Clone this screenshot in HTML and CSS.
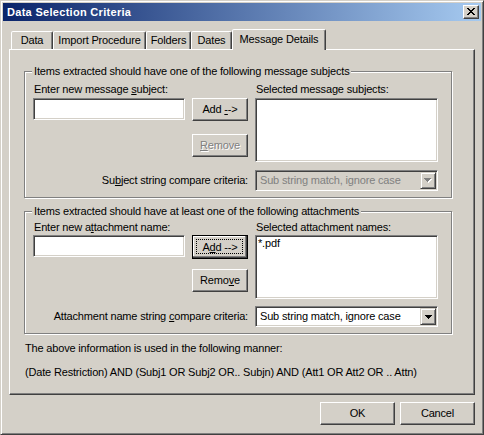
FILE: index.html
```html
<!DOCTYPE html>
<html>
<head>
<meta charset="utf-8">
<link rel="stylesheet" href="styles.css">
</head>
<body>
<div class="window">
  <div class="titlebar">
    <span class="title">Data Selection Criteria</span>
    <div class="close"><svg width="8" height="7" viewBox="0 0 8 7" shape-rendering="crispEdges"><path fill="#000" d="M0 0h2v1H0zM6 0h2v1H6zM1 1h2v1H1zM5 1h2v1H5zM2 2h4v1H2zM3 3h2v1H3zM2 4h4v1H2zM1 5h2v1H1zM5 5h2v1H5zM0 6h2v1H0zM6 6h2v1H6z"/></svg></div>
  </div>
  <div class="body">
    <div class="tabs">
      <div class="tab t-data">Data</div>
      <div class="tab t-import">Import Procedure</div>
      <div class="tab t-folders">Folders</div>
      <div class="tab t-dates">Dates</div>
      <div class="tab t-msg sel">Message Details</div>
    </div>
    <div class="panel">
      <fieldset class="group g1">
        <legend>Items extracted should have one of the following message subjects</legend>
        <div class="grid">
          <div class="lbl l1">Enter new message <u>s</u>ubject:</div>
          <div class="lbl l3">Selected message subjects:</div>
          <div class="edit in"></div>
          <div class="btn add">Add&nbsp;<u>-</u>-&gt;</div>
          <div class="btn rem disabled"><u>R</u>emove</div>
          <div class="list"></div>
          <div class="clabel">Su<u>b</u>ject string compare criteria:</div>
          <div class="combo disabled"><span class="ctext">Sub string match, ignore case</span><span class="arrowbtn"><svg width="8" height="5" viewBox="0 0 8 5" shape-rendering="crispEdges"><path fill="#fff" d="M1 1h7v1H1zM2 2h5v1H2zM3 3h3v1H3zM4 4h1v1H4z"/><path fill="#808080" d="M0 0h7v1H0zM1 1h5v1H1zM2 2h3v1H2zM3 3h1v1H3z"/></svg></span></div>
        </div>
      </fieldset>
      <fieldset class="group g2">
        <legend>Items extracted should have at least one of the following attachments</legend>
        <div class="grid">
          <div class="lbl l1">Enter new a<u>t</u>tachment name:</div>
          <div class="lbl l3">Selected attachment names:</div>
          <div class="edit in"></div>
          <div class="btn add focus">A<u>d</u>d --&gt;</div>
          <div class="btn rem">Remo<u>v</u>e</div>
          <div class="list"><div class="item">*.pdf</div></div>
          <div class="clabel">Attachment name string <u>c</u>ompare criteria:</div>
          <div class="combo"><span class="ctext">Sub string match, ignore case</span><span class="arrowbtn"><svg width="7" height="4" viewBox="0 0 7 4" shape-rendering="crispEdges"><path fill="#000" d="M0 0h7v1H0zM1 1h5v1H1zM2 2h3v1H2zM3 3h1v1H3z"/></svg></span></div>
        </div>
      </fieldset>
      <p class="note n1">The above information is used in the following manner:</p>
      <p class="note n2">(Date Restriction) AND (Subj1 OR Subj2 OR.. Subjn) AND (Att1 OR Att2 OR .. Attn)</p>
    </div>
    <div class="footer">
      <div class="btn dlg">OK</div>
      <div class="btn dlg">Cancel</div>
    </div>
  </div>
</div>
</body>
</html>
```
FILE: styles.css
```css
* { box-sizing: border-box; margin: 0; padding: 0; }
html, body { width: 484px; height: 435px; overflow: hidden; background: #D4D0C8; }
body { font-family: "Liberation Sans", Arial, sans-serif; font-size: 11px; line-height: 13px; color: #000; letter-spacing: -0.17px; }
u { text-decoration: underline; text-underline-offset: 1px; }

.window {
  width: 484px; height: 435px;
  border: 1px solid; border-color: #D4D0C8 #404040 #404040 #D4D0C8;
  box-shadow: inset 1px 1px #fff, inset -1px -1px #808080;
  padding: 2px; background: #D4D0C8;
  display: flex; flex-direction: column;
}

.titlebar {
  height: 18px; display: flex; align-items: center;
  padding: 0 2px;
  background: linear-gradient(to right, #0A246A, #A6CAF0);
}
.title { color: #fff; font-weight: bold; font-size: 11px; padding-left: 2px; letter-spacing: 0.3px; }
.close {
  margin-left: auto; width: 16px; height: 14px; background: #D4D0C8;
  border: 1px solid; border-color: #fff #404040 #404040 #fff;
  box-shadow: inset -1px -1px #808080;
  display: flex; align-items: center; justify-content: center;
  padding: 0 1px 1px 0;
}
.close svg { display: block; }

.body { padding: 8px 6px 0; flex: 1; display: flex; flex-direction: column; }

.tabs { height: 20px; display: flex; align-items: flex-end; padding-left: 2px; }
.tab {
  height: 18px; border: 1px solid; border-bottom: none;
  border-color: #fff #404040 transparent #fff;
  border-radius: 2px 2px 0 0;
  box-shadow: inset -1px 0 #808080;
  display: flex; align-items: center; justify-content: center;
  background: #D4D0C8;
}
.t-data { width: 42px; }
.t-import { width: 93px; }
.t-folders { width: 45px; }
.t-dates { width: 41px; }
.t-msg { width: 94px; }
.tab.sel { height: 21px; margin-bottom: -1px; position: relative; z-index: 1; padding-bottom: 2px; }

.panel {
  height: 346px;
  border: 1px solid; border-color: #fff #404040 #404040 #fff;
  box-shadow: inset -1px -1px #808080;
  padding-left: 14px;
}

.group {
  width: 428px;
  border: 1px solid #808080;
  box-shadow: 1px 1px #fff, inset 1px 1px #fff;
  padding: 0 8px 6px;
}
.group legend { margin-left: -1px; padding: 0 2px; line-height: 13px; background: #D4D0C8; }
.g1 { margin-top: 15px; }
.g2 { margin-top: 7px; }

.grid {
  display: grid;
  grid-template-columns: 152px 56px 183px;
  column-gap: 7px;
}
.g1 .grid { grid-template-rows: 20px 36px 36px 21px; }
.g2 .grid { grid-template-rows: 17px 34px 37px 21px; }

.lbl { align-self: end; white-space: nowrap; }
.g1 .lbl { margin-bottom: 2px; }
.g2 .lbl { margin-bottom: 1px; }
.l1 { grid-column: 1; grid-row: 1; padding-left: 1px; }
.l3 { grid-column: 3; grid-row: 1; padding-left: 1px; }

.edit, .list, .combo {
  border: 1px solid; border-color: #808080 #fff #fff #808080;
  box-shadow: inset 1px 1px #404040, inset -1px -1px #D4D0C8;
  background: #fff;
}
.in { grid-column: 1; grid-row: 2; height: 22px; align-self: start; }
.list { grid-column: 3; grid-row: 2 / 4; height: 64px; align-self: start; padding: 1px 2px; }
.item { line-height: 13px; }

.btn {
  border: 1px solid; border-color: #fff #404040 #404040 #fff;
  box-shadow: inset -1px -1px #808080;
  background: #D4D0C8;
  display: flex; align-items: center; justify-content: center;
  height: 23px; white-space: nowrap;
}
.add { grid-column: 2; grid-row: 2; align-self: start; }
.rem { grid-column: 2; grid-row: 3; align-self: start; }
.btn.disabled { color: #808080; text-shadow: 1px 1px #fff; }
.btn.focus {
  height: 24px; position: relative;
  border-color: #000;
  box-shadow: inset -1px -1px #404040, inset -2px -2px #808080, inset 1px 1px #fff;
}
.btn.focus::after {
  content: ""; position: absolute; left: 3px; top: 3px; right: 4px; bottom: 4px;
  border: 1px dotted #000;
}

.clabel { grid-column: 1 / 3; grid-row: 4; justify-self: end; align-self: center; white-space: nowrap; }
.combo {
  grid-column: 3; grid-row: 4; height: 21px; padding: 1px;
  display: flex; align-items: center;
}
.combo.disabled { background: #D4D0C8; color: #808080; }
.ctext { padding-left: 3px; white-space: nowrap; }
.arrowbtn {
  margin-left: auto; width: 16px; height: 17px;
  border: 1px solid; border-color: #D4D0C8 #404040 #404040 #D4D0C8;
  box-shadow: inset 1px 1px #fff, inset -1px -1px #808080;
  background: #D4D0C8;
  display: flex; align-items: center; justify-content: center;
}
.arrowbtn svg { display: block; }

.note { padding-left: 1px; white-space: nowrap; }
.n1 { margin-top: 8px; }
.n2 { margin-top: 11px; }

.footer { display: flex; justify-content: flex-end; gap: 5px; margin-top: 7px; }
.dlg { width: 75px; height: 23px; }
```
